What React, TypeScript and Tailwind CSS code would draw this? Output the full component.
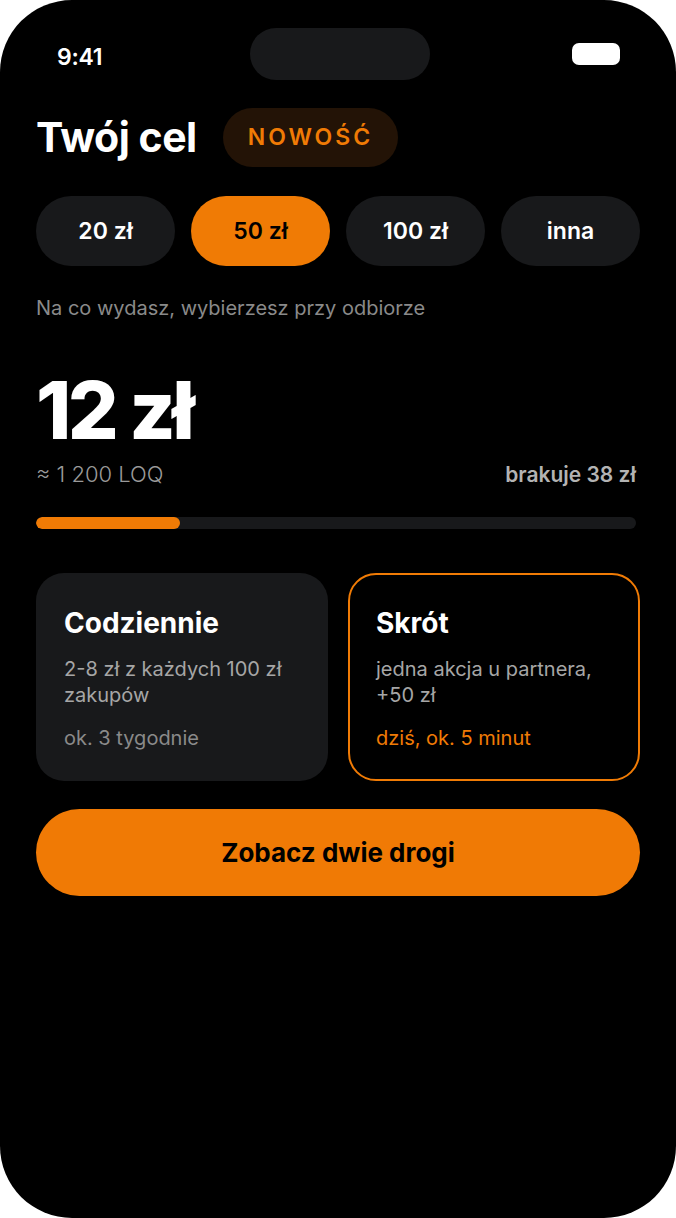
const FONT = { fontFamily: "Inter, 'Noto Sans', sans-serif" };

const amounts = ["20 zł", "50 zł", "100 zł", "inna"];

function StatusBar() {
  return (
    <div className="relative h-[108px] shrink-0">
      <span className="absolute left-[57px] top-[40px] text-[23px] font-semibold text-white tracking-[-0.3px]">
        9:41
      </span>
      <div className="absolute left-[250px] top-[28px] w-[180px] h-[52px] rounded-full bg-[#18191b]" />
      <div className="absolute left-[572px] top-[43px] w-[48px] h-[22px] rounded-[7px] bg-white" />
    </div>
  );
}

function Card({
  title,
  body,
  note,
  active,
}: {
  title: string;
  body: string;
  note: string;
  active?: boolean;
}) {
  return (
    <div
      className={`h-[208px] rounded-[28px] ${
        active ? "border-2 border-[#f07b05] bg-black px-[26px] pt-[32px]" : "bg-[#18191b] px-[28px] pt-[34px]"
      }`}
    >
      <div className="text-[28px] font-bold text-white leading-[32px]">{title}</div>
      <div className="mt-[17px] text-[20px] leading-[26px] text-[#a6a6a6] max-w-[232px]">{body}</div>
      <div className={`mt-[17px] text-[20px] leading-[26px] ${active ? "text-[#f07b05]" : "text-[#8a8a8a]"}`}>
        {note}
      </div>
    </div>
  );
}

export default function App() {
  return (
    <div className="w-[676px] h-[1218px] bg-white" style={FONT}>
      <div className="w-full h-full bg-black rounded-[72px] flex flex-col">
        <StatusBar />
        <div className="px-[36px] flex flex-col">
          <div className="flex items-center gap-[26px]">
            <h1 className="text-[41px] font-bold text-white tracking-[-0.5px] leading-none">Twój cel</h1>
            <span className="h-[59px] px-[25px] rounded-full bg-[#231306] text-[#f07b05] text-[23px] font-semibold tracking-[3px] flex items-center">
              NOWOŚĆ
            </span>
          </div>

          <div className="mt-[29px] grid grid-cols-4 gap-[16px]">
            {amounts.map((a, i) => (
              <div
                key={a}
                className={`h-[70px] rounded-full flex items-center justify-center text-[23px] font-semibold ${
                  i === 1 ? "bg-[#f07b05] text-black" : "bg-[#18191b] text-white"
                }`}
              >
                {a}
              </div>
            ))}
          </div>

          <p className="mt-[30px] text-[20px] text-[#8a8a8a] leading-[24px]">
            Na co wydasz, wybierzesz przy odbiorze
          </p>

          <div className="mt-[50px] text-[80px] font-extrabold text-white leading-[80px] tracking-[-3.5px]">12 zł</div>

          <div className="mt-[8px] flex items-center justify-between pr-[4px]">
            <span className="text-[22px] font-light text-[#9a9a9a]">≈ 1 200 LOQ</span>
            <span className="text-[21px] font-semibold text-[#b3b3b3]">brakuje 38 zł</span>
          </div>

          <div className="mt-[26px] mr-[4px] h-[12px] rounded-full bg-[#18191b] overflow-hidden">
            <div className="h-full rounded-full bg-[#f07b05]" style={{ width: "24%" }} />
          </div>

          <div className="mt-[44px] grid grid-cols-2 gap-[20px]">
            <Card title="Codziennie" body="2-8 zł z każdych 100 zł zakupów" note="ok. 3 tygodnie" />
            <Card title="Skrót" body="jedna akcja u partnera, +50 zł" note="dziś, ok. 5 minut" active />
          </div>

          <button className="mt-[28px] h-[87px] rounded-full bg-[#f07a05] text-black text-[26px] font-bold flex items-center justify-center">
            Zobacz dwie drogi
          </button>
        </div>
      </div>
    </div>
  );
}
